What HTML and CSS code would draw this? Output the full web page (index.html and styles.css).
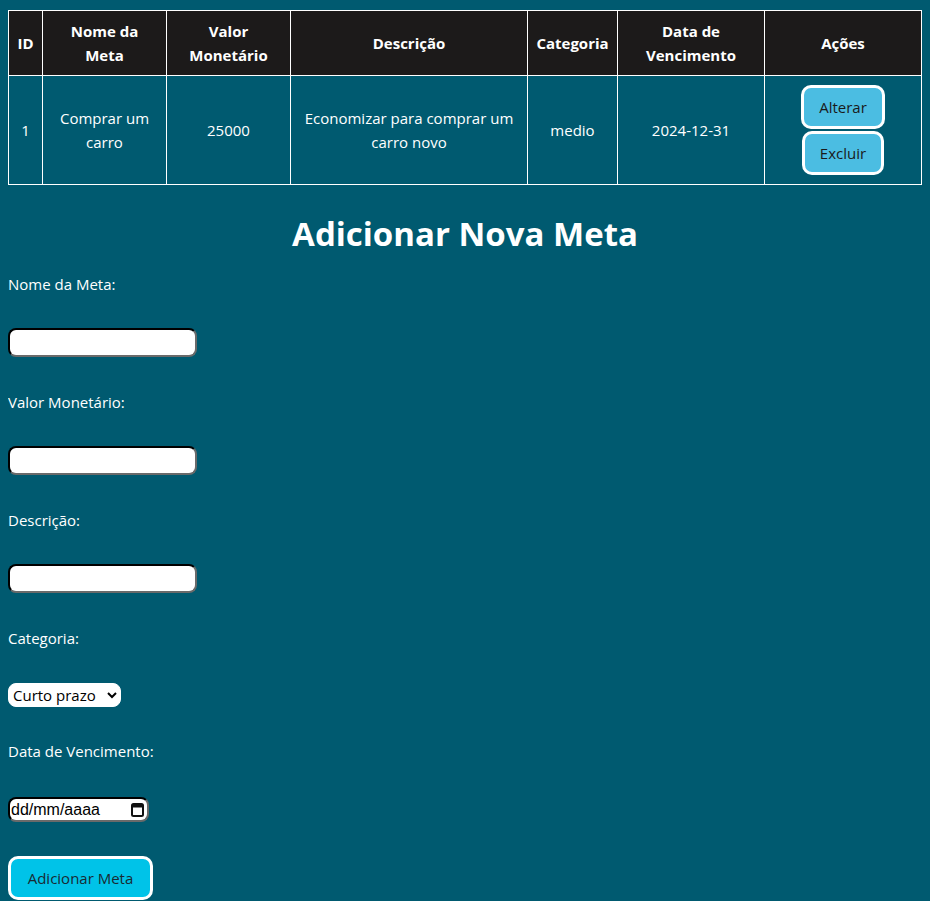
FILE: index.html
```html
<!DOCTYPE html>
<html lang="pt-BR">
<head>
<meta charset="utf-8">
<title>Metas</title>
<link rel="stylesheet" href="styles.css">
</head>
<body>
<table class="goals">
  <colgroup>
    <col class="c-id"><col class="c-nome"><col class="c-valor"><col class="c-desc"><col class="c-cat"><col class="c-data"><col class="c-acoes">
  </colgroup>
  <thead>
    <tr>
      <th>ID</th>
      <th>Nome da Meta</th>
      <th>Valor Monetário</th>
      <th>Descrição</th>
      <th>Categoria</th>
      <th>Data de Vencimento</th>
      <th>Ações</th>
    </tr>
  </thead>
  <tbody>
    <tr>
      <td>1</td>
      <td>Comprar um carro</td>
      <td>25000</td>
      <td>Economizar para comprar um carro novo</td>
      <td>medio</td>
      <td>2024-12-31</td>
      <td>
        <div class="actions">
          <button class="btn">Alterar</button>
          <button class="btn">Excluir</button>
        </div>
      </td>
    </tr>
  </tbody>
</table>

<h1 class="title">Adicionar Nova Meta</h1>

<form class="goal-form">
  <label class="lbl" for="nome">Nome da Meta:</label>
  <input class="field" id="nome" type="text">
  <label class="lbl" for="valor">Valor Monetário:</label>
  <input class="field" id="valor" type="text">
  <label class="lbl" for="desc">Descrição:</label>
  <input class="field" id="desc" type="text">
  <label class="lbl" for="cat">Categoria:</label>
  <select class="sel" id="cat">
    <option>Curto prazo</option>
    <option>Médio prazo</option>
    <option>Longo prazo</option>
  </select>
  <label class="lbl" for="data">Data de Vencimento:</label>
  <div class="date-wrap">
    <input class="date" id="data" type="text" placeholder="dd/mm/aaaa">
    <svg class="cal" width="13" height="15" viewBox="0 0 13 15" aria-hidden="true">
      <rect x="1" y="2" width="11" height="12" rx="1.5" fill="none" stroke="#111" stroke-width="2"/>
      <rect x="1" y="2" width="11" height="3.5" fill="#111"/>
    </svg>
  </div>
  <button class="submit" type="button">Adicionar Meta</button>
</form>
</body>
</html>
```
FILE: styles.css
```css
html, body {
  background: #005a70;
}
body {
  margin: 8px;
  color: #ffffff;
  font-family: "Open Sans", "Noto Sans", sans-serif;
  font-size: 15px;
}
.goals {
  width: 914px;
  margin-top: 2px;
  border-collapse: collapse;
  table-layout: fixed;
  border: 1px solid #ffffff;
}
.c-id { width: 34px; }
.c-nome { width: 124px; }
.c-valor { width: 124px; }
.c-desc { width: 237px; }
.c-cat { width: 90px; }
.c-data { width: 147px; }
.c-acoes { width: 157px; }
.goals th, .goals td {
  border: 1px solid #ffffff;
  padding: 8px;
  text-align: center;
  line-height: 24px;
}
.goals th {
  background: #1c1a1a;
  font-weight: 700;
}
.actions {
  display: flex;
  flex-direction: column;
  align-items: center;
  gap: 2px;
  padding: 1px 0;
}
.btn {
  font-family: inherit;
  font-size: 15px;
  color: #1a1a1a;
  background: #4bbde2;
  border: 3px solid #ffffff;
  border-radius: 10px;
  height: 44px;
  padding: 0 15px;
}
.title {
  font-size: 33px;
  line-height: 37px;
  margin: 30px 0 12px;
  text-align: center;
  font-weight: 700;
}
.goal-form {
  display: flex;
  flex-direction: column;
  align-items: flex-start;
  padding-top: 10px;
}
.lbl {
  line-height: 21px;
  margin-bottom: 33px;
}
.field {
  width: 189px;
  height: 29px;
  box-sizing: border-box;
  border: 2px inset #333;
  border-color: #1e1e1e #6a6a6a #6a6a6a #1e1e1e;
  border-radius: 8px;
  background: #fff;
  margin-bottom: 35px;
}
.sel {
  font-family: inherit;
  font-size: 15px;
  height: 24px;
  width: 113px;
  border-radius: 8px;
  border: 1px solid #ffffff;
  background: #fff;
  color: #000;
  margin-top: 1px;
  margin-bottom: 34px;
}
.date-wrap {
  position: relative;
  width: 141px;
  height: 25px;
  margin-top: 2px;
  margin-bottom: 34px;
}
.date {
  font-family: "Liberation Sans", Arial, sans-serif;
  font-size: 16px;
  width: 141px;
  height: 25px;
  box-sizing: border-box;
  border: 2px inset #333;
  border-color: #1e1e1e #6a6a6a #6a6a6a #1e1e1e;
  border-radius: 8px;
  background: #fff;
  color: #000;
  padding: 0 1px;
  margin: 0;
}
.date::placeholder {
  color: #000;
  opacity: 1;
}
.cal {
  position: absolute;
  right: 5px;
  top: 5px;
}
.submit {
  font-family: inherit;
  font-size: 15px;
  color: #1a2a33;
  background: #00c3e8;
  border: 3px solid #ffffff;
  border-radius: 10px;
  height: 44px;
  width: 145px;
}
```
